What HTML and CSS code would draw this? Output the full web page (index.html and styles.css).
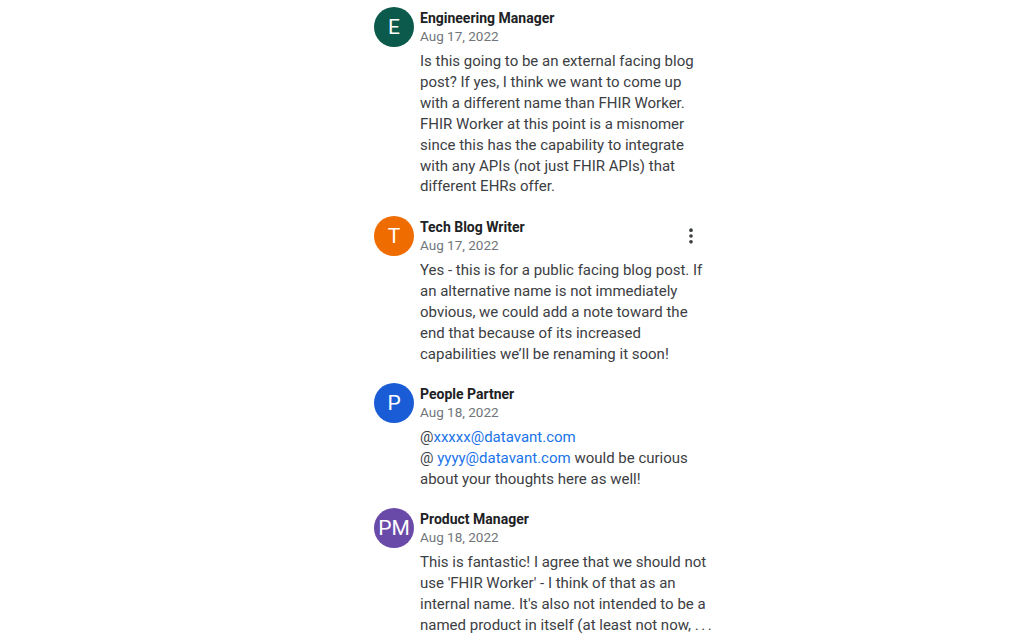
FILE: index.html
```html
<!DOCTYPE html>
<html lang="en">
<head>
<meta charset="utf-8">
<title>Comments</title>
<link rel="stylesheet" href="styles.css">
</head>
<body>
<div class="thread">
  <div class="comment">
    <div class="avatar av-green">E</div>
    <div class="content">
      <div class="head">
        <div class="meta">
          <div class="name">Engineering Manager</div>
          <div class="date">Aug 17, 2022</div>
        </div>
      </div>
      <p class="text">Is this going to be an external facing blog post? If yes, I think we want to come up with a different name than FHIR Worker. FHIR Worker at this point is a misnomer since this has the capability to integrate with any APIs (not just FHIR APIs) that different EHRs offer.</p>
    </div>
  </div>

  <div class="comment">
    <div class="avatar av-orange">T</div>
    <div class="content">
      <div class="head">
        <div class="meta">
          <div class="name">Tech Blog Writer</div>
          <div class="date">Aug 17, 2022</div>
        </div>
        <div class="kebab" aria-label="More options">
          <svg width="24" height="24" viewBox="0 0 24 24"><circle cx="12" cy="5" r="2.2" fill="#3c4043"/><circle cx="12" cy="12" r="2.2" fill="#3c4043"/><circle cx="12" cy="19" r="2.2" fill="#3c4043"/></svg>
        </div>
      </div>
      <p class="text">Yes - this is for a public facing blog post. If an alternative name is not immediately obvious, we could add a note toward the end that because of its increased capabilities we’ll be renaming it soon!</p>
    </div>
  </div>

  <div class="comment">
    <div class="avatar av-blue">P</div>
    <div class="content">
      <div class="head">
        <div class="meta">
          <div class="name">People Partner</div>
          <div class="date">Aug 18, 2022</div>
        </div>
      </div>
      <p class="text"><span class="line">@<a class="mention">xxxxx@datavant.com</a></span><span class="line">@&nbsp;<a class="mention">yyyy@datavant.com</a> would be curious about your thoughts here as well!</span></p>
    </div>
  </div>

  <div class="comment">
    <div class="avatar av-purple">PM</div>
    <div class="content">
      <div class="head">
        <div class="meta">
          <div class="name">Product Manager</div>
          <div class="date">Aug 18, 2022</div>
        </div>
      </div>
      <p class="text">This is fantastic! I agree that we should not use 'FHIR Worker' - I think of that as an internal name. It's also not intended to be a <span class="nowrap">named product in itself (at least not now, <span class="ellip">...</span></span></p>
    </div>
  </div>
</div>
</body>
</html>
```
FILE: styles.css
```css
html, body {
  margin: 0;
  padding: 0;
  background: #ffffff;
}

body {
  font-family: Roboto, "Liberation Sans", Arial, sans-serif;
  color: #3c4043;
}

.thread {
  width: 345px;
  margin-left: 374px;
  padding-top: 7px;
  display: flex;
  flex-direction: column;
  gap: 18.6px;
}

.comment {
  display: flex;
  gap: 6px;
}

.avatar {
  flex: 0 0 40px;
  width: 40px;
  height: 40px;
  border-radius: 50%;
  color: #ffffff;
  display: flex;
  align-items: center;
  justify-content: center;
  font-size: 21px;
  font-weight: 400;
}

.av-green { background: #0b5a4b; }
.av-orange { background: #ef6c00; }
.av-blue { background: #1a5bd6; }
.av-purple { background: #6a4aa9; }

.content {
  flex: 1;
  min-width: 0;
}

.head {
  display: flex;
  align-items: center;
  padding-top: 2px;
}

.meta {
  flex: 1;
}

.name {
  font-size: 14px;
  font-weight: 700;
  color: #202124;
  line-height: 18px;
}

.date {
  font-size: 13.5px;
  color: #70757a;
  line-height: 18px;
}

.kebab {
  width: 24px;
  height: 24px;
  margin-right: 16px;
  display: flex;
}

.kebab svg {
  width: 20px;
  height: 20px;
  margin: 2px;
}

.text {
  margin: 6px 0 0;
  font-size: 15px;
  line-height: 20.9px;
  color: #3c4043;
  width: 290px;
}

.line {
  display: block;
}

.nowrap {
  white-space: nowrap;
}

.ellip {
  letter-spacing: 2.5px;
}

.mention {
  color: #1a73e8;
  text-decoration: none;
}
```
